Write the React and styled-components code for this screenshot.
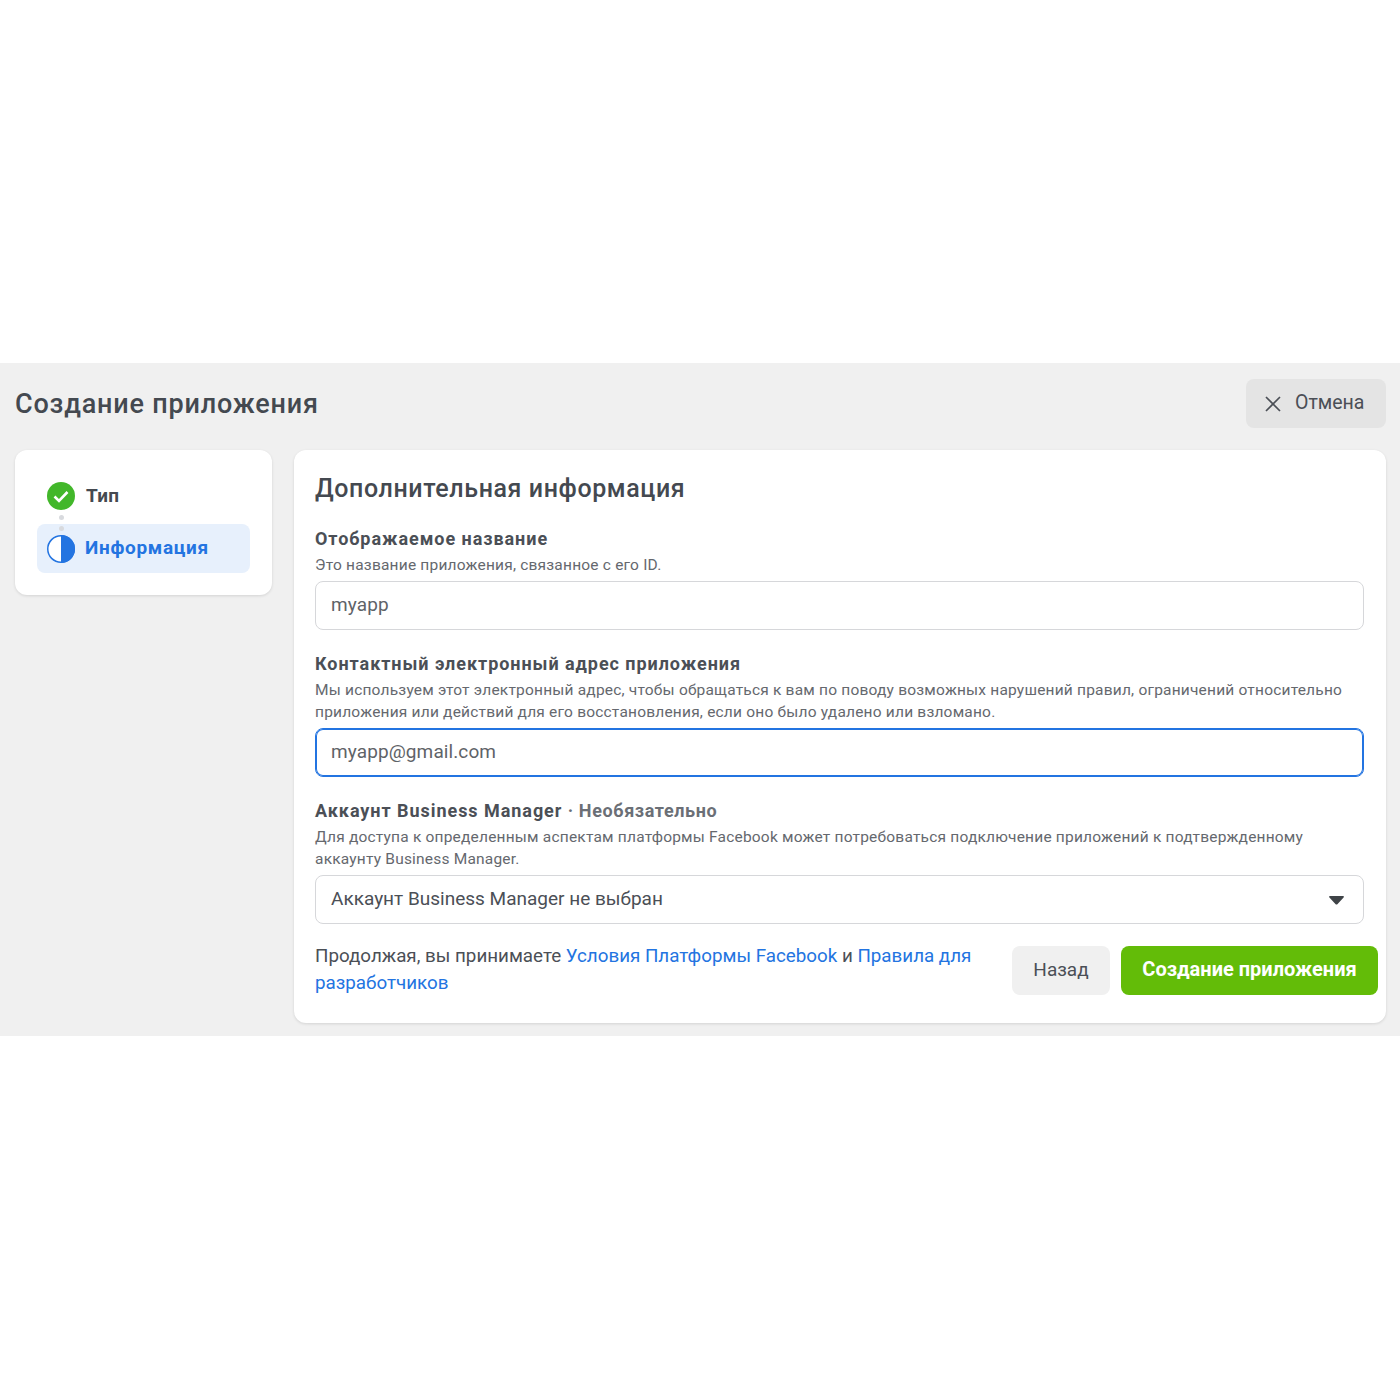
import styled, { createGlobalStyle } from 'styled-components';

const GlobalStyle = createGlobalStyle`
	html, body {
		margin: 0;
		padding: 0;
		background: #fff;
	}
	body {
		font-family: Roboto, "Liberation Sans", sans-serif;
		color: #444950;
	}
	* {
		box-sizing: border-box;
	}
`;

const Page = styled.div`
	height: 1400px;
	padding-top: 363px;
`;

const Band = styled.div`
	height: 673px;
	background: #f0f0f0;
	padding: 16px 14px 0 15px;
`;

const TopBar = styled.div`
	display: flex;
	justify-content: space-between;
	align-items: center;
	height: 49px;
	margin-bottom: 22px;
`;

const Title = styled.h1`
	margin: 0;
	font-size: 27px;
	font-weight: 500;
	letter-spacing: 0.8px;
	color: #444950;
`;

const CancelButton = styled.button`
	display: flex;
	align-items: center;
	gap: 13px;
	width: 140px;
	height: 49px;
	padding: 0 0 2px 18px;
	border: 0;
	border-radius: 8px;
	background: #e4e4e4;
	color: #4b4f56;
	font: 400 19.5px Roboto, sans-serif;

	svg {
		margin-top: 2px;
	}
`;

const Columns = styled.div`
	display: flex;
	align-items: flex-start;
	gap: 22px;
`;

const Card = styled.div`
	background: #fff;
	border-radius: 12px;
	box-shadow: 0 1px 3px rgba(0, 0, 0, 0.12);
`;

const Sidebar = styled(Card)`
	position: relative;
	width: 257px;
	height: 145px;
	padding: 21px 22px 0;
`;

const Step = styled.div`
	display: flex;
	align-items: center;
	gap: ${(p) => (p.$active ? '10px' : '11px')};
	height: ${(p) => (p.$active ? '49px' : '50px')};
	padding-left: 10px;
	border-radius: 8px;
	background: ${(p) => (p.$active ? '#e7f0fc' : 'transparent')};
	color: ${(p) => (p.$active ? '#2374e1' : '#444950')};
	font-size: 19px;
	font-weight: 700;
	letter-spacing: ${(p) => (p.$active ? '0.7px' : '0.3px')};
	margin-bottom: ${(p) => (p.$active ? '0' : '3px')};

	svg {
		flex: none;
	}
`;

const StepName = styled.span`
	margin-top: -2px;
`;

const Dot = styled.span`
	position: absolute;
	left: 44px;
	top: ${(p) => p.$top}px;
	width: 5px;
	height: 5px;
	border-radius: 50%;
	background: #d8dade;
`;

const Main = styled(Card)`
	width: 1092px;
	height: 573px;
	padding: 24px 22px 0 21px;
`;

const Heading = styled.h2`
	margin: 0 0 23px;
	font-size: 25px;
	line-height: 30px;
	font-weight: 500;
	letter-spacing: 0.6px;
	color: #444950;
`;

const Field = styled.div`
	margin-bottom: 22px;
`;

const Label = styled.div`
	font-size: 18px;
	line-height: 24px;
	font-weight: 700;
	letter-spacing: 0.95px;
	color: #4b4f56;

	span {
		color: #6b6f76;
		letter-spacing: 0.6px;
	}
`;

const Help = styled.div`
	margin-top: 3px;
	margin-bottom: 5px;
	font-size: 15.5px;
	line-height: 22px;
	letter-spacing: 0.2px;
	color: #65686e;
`;

const Input = styled.input`
	display: block;
	width: 100%;
	height: 49px;
	padding: 0 15px 2px;
	border: 1px solid ${(p) => (p.$focused ? '#2374e1' : '#d6d7da')};
	border-radius: 8px;
	outline: none;
	box-shadow: ${(p) => (p.$focused ? 'inset 0 0 0 1px #2374e1' : 'none')};
	background: #fff;
	color: #5f6368;
	font: 400 19px Roboto, sans-serif;
	letter-spacing: 0.1px;
`;

const Select = styled.div`
	display: flex;
	justify-content: space-between;
	align-items: center;
	height: 49px;
	padding: 0 19px 2px 15px;
	border: 1px solid #d6d7da;
	border-radius: 8px;
	color: #4b4f56;
	font-size: 19px;

	svg {
		margin-top: 3px;
	}
`;

const Footer = styled.div`
	display: flex;
	justify-content: space-between;
	align-items: flex-start;
	margin-right: -14px;
	margin-top: 3px;
`;

const Terms = styled.p`
	width: 680px;
	margin: -3px 0 0;
	font-size: 18.8px;
	line-height: 27px;
	color: #4b4f56;

	a {
		color: #2374e1;
		text-decoration: none;
	}
`;

const Actions = styled.div`
	display: flex;
	gap: 11px;
`;

const ActionButton = styled.button`
	height: 49px;
	width: ${(p) => (p.$primary ? '257px' : '98px')};
	padding: 0 0 3px;
	border: 0;
	border-radius: 8px;
	background: ${(p) => (p.$primary ? '#63bc08' : '#f0f0f0')};
	color: ${(p) => (p.$primary ? '#fff' : '#4b4f56')};
	font: ${(p) => (p.$primary ? 700 : 400)} ${(p) => (p.$primary ? '20px' : '19px')} Roboto, sans-serif;
`;

const CheckIcon = () => (
	<svg width="28" height="28" viewBox="0 0 28 28">
		<circle cx="14" cy="14" r="14" fill="#42b72a" />
		<path d="M7.5 14.5l4.5 4.5 8.5-9" fill="none" stroke="#fff" strokeWidth="2.6" />
	</svg>
);

const HalfIcon = () => (
	<svg width="28" height="28" viewBox="0 0 28 28">
		<circle cx="14" cy="14" r="13.25" fill="#fff" stroke="#2374e1" strokeWidth="1.5" />
		<path d="M14 0a14 14 0 0 1 0 28z" fill="#2374e1" />
	</svg>
);

const CloseIcon = () => (
	<svg width="18" height="18" viewBox="0 0 18 18">
		<path d="M2 2l14 14M16 2L2 16" fill="none" stroke="#4b4f56" strokeWidth="1.7" />
	</svg>
);

const CaretIcon = () => (
	<svg width="15" height="9" viewBox="0 0 15 9">
		<path d="M1 0h13c1 0 1.2.8.6 1.4L8.6 8a1.5 1.5 0 0 1-2.2 0L.4 1.4C-.2.8 0 0 1 0z" fill="#3f4347" />
	</svg>
);

const App = () => {
	return (
		<Page>
			<GlobalStyle />
			<Band>
				<TopBar>
					<Title>Создание приложения</Title>
					<CancelButton>
						<CloseIcon />
						Отмена
					</CancelButton>
				</TopBar>
				<Columns>
					<Sidebar>
						<Step>
							<CheckIcon />
							<StepName>Тип</StepName>
						</Step>
						<Dot $top={65} />
						<Dot $top={76} />
						<Step $active>
							<HalfIcon />
							<StepName>Информация</StepName>
						</Step>
					</Sidebar>
					<Main>
						<Heading>Дополнительная информация</Heading>
						<Field>
							<Label>Отображаемое название</Label>
							<Help>Это название приложения, связанное с его ID.</Help>
							<Input readOnly value="myapp" />
						</Field>
						<Field>
							<Label>Контактный электронный адрес приложения</Label>
							<Help>
								Мы используем этот электронный адрес, чтобы обращаться к вам по поводу возможных нарушений правил, ограничений относительно приложения или действий для его восстановления, если оно было удалено или взломано.
							</Help>
							<Input $focused readOnly value="myapp@gmail.com" />
						</Field>
						<Field>
							<Label>
								Аккаунт Business Manager <span>· Необязательно</span>
							</Label>
							<Help>
								Для доступа к определенным аспектам платформы Facebook может потребоваться подключение приложений к подтвержденному аккаунту Business Manager.
							</Help>
							<Select>
								Аккаунт Business Manager не выбран
								<CaretIcon />
							</Select>
						</Field>
						<Footer>
							<Terms>
								Продолжая, вы принимаете <a href="#terms">Условия Платформы Facebook</a> и <a href="#rules">Правила для разработчиков</a>
							</Terms>
							<Actions>
								<ActionButton>Назад</ActionButton>
								<ActionButton $primary>Создание приложения</ActionButton>
							</Actions>
						</Footer>
					</Main>
				</Columns>
			</Band>
		</Page>
	);
};

export default App;
